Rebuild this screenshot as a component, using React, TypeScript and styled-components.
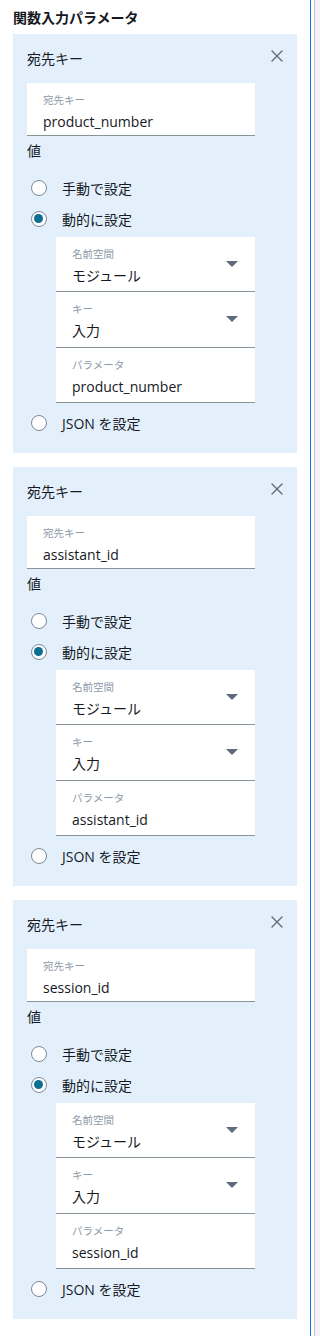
import React from 'react';
import styled, { createGlobalStyle } from 'styled-components';

const GlobalStyle = createGlobalStyle`
  body {
    margin: 0;
    background: #ffffff;
    color: #16191f;
    font-family: "Open Sans", "Noto Sans CJK JP", sans-serif;
  }
`;

type Param = {
  destKey: string;
  mode: 'manual' | 'dynamic' | 'json';
  namespace: string;
  key: string;
  parameter: string;
};

const params: Param[] = [
  { destKey: 'product_number', mode: 'dynamic', namespace: 'モジュール', key: '入力', parameter: 'product_number' },
  { destKey: 'assistant_id', mode: 'dynamic', namespace: 'モジュール', key: '入力', parameter: 'assistant_id' },
  { destKey: 'session_id', mode: 'dynamic', namespace: 'モジュール', key: '入力', parameter: 'session_id' },
];

const CloseIcon = () => (
  <svg width="12" height="12" viewBox="0 0 12 12">
    <path d="M1 1 L11 11 M11 1 L1 11" stroke="#5f6b7a" strokeWidth="1.4" strokeLinecap="round" fill="none" />
  </svg>
);

const Caret = () => (
  <svg width="12" height="6" viewBox="0 0 12 6">
    <path d="M0 0 H12 L6 6 Z" fill="#5f6b7a" />
  </svg>
);

const ParamCard: React.FC<{ param: Param }> = ({ param }) => {
  return (
    <StyledCard>
      <StyledHeader>
        <StyledHeaderTitle>宛先キー</StyledHeaderTitle>
        <StyledClose type="button" aria-label="削除">
          <CloseIcon />
        </StyledClose>
      </StyledHeader>

      <StyledField width={228} height={53}>
        <StyledFieldBody>
          <StyledFieldLabel>宛先キー</StyledFieldLabel>
          <StyledFieldValue>{param.destKey}</StyledFieldValue>
        </StyledFieldBody>
      </StyledField>

      <StyledSectionLabel>値</StyledSectionLabel>

      <StyledRadioGroup>
        <StyledRadioRow>
          <StyledRadio checked={param.mode === 'manual'} />
          <span>手動で設定</span>
        </StyledRadioRow>
        <StyledRadioRow>
          <StyledRadio checked={param.mode === 'dynamic'} />
          <span>動的に設定</span>
        </StyledRadioRow>

        <StyledNested>
          <StyledField width={199} height={55}>
            <StyledFieldBody>
              <StyledFieldLabel>名前空間</StyledFieldLabel>
              <StyledFieldValue>{param.namespace}</StyledFieldValue>
            </StyledFieldBody>
            <StyledCaretWrap>
              <Caret />
            </StyledCaretWrap>
          </StyledField>
          <StyledField width={199} height={56}>
            <StyledFieldBody>
              <StyledFieldLabel>キー</StyledFieldLabel>
              <StyledFieldValue>{param.key}</StyledFieldValue>
            </StyledFieldBody>
            <StyledCaretWrap>
              <Caret />
            </StyledCaretWrap>
          </StyledField>
          <StyledField width={199} height={55}>
            <StyledFieldBody>
              <StyledFieldLabel>パラメータ</StyledFieldLabel>
              <StyledFieldValue>{param.parameter}</StyledFieldValue>
            </StyledFieldBody>
          </StyledField>
        </StyledNested>

        <StyledRadioRow>
          <StyledRadio checked={param.mode === 'json'} />
          <span>JSON を設定</span>
        </StyledRadioRow>
      </StyledRadioGroup>
    </StyledCard>
  );
};

const App: React.FC = () => {
  return (
    <>
      <GlobalStyle />
      <StyledPage>
        <StyledMain>
          <StyledTitle>関数入力パラメータ</StyledTitle>
          <StyledCardList>
            {params.map((param, index) => (
              <ParamCard key={index} param={param} />
            ))}
          </StyledCardList>
        </StyledMain>
        <StyledGutter />
        <StyledRail />
      </StyledPage>
    </>
  );
};

export default App;

const StyledPage = styled.div`
  display: flex;
  min-height: 1336px;
`;

const StyledMain = styled.div`
  box-sizing: border-box;
  width: 311px;
  padding: 8px 0 0 13px;
  border-right: 1px solid #0972d3;
`;

const StyledGutter = styled.div`
  width: 3px;
  background: #ffffff;
`;

const StyledRail = styled.div`
  flex: 1;
  border-left: 1px solid #c6c6cd;
  background: #f4f4f6;
`;

const StyledTitle = styled.div`
  font-size: 14px;
  font-weight: 700;
  line-height: 20px;
  margin-bottom: 6px;
`;

const StyledCardList = styled.div`
  display: flex;
  flex-direction: column;
  gap: 14px;
  width: 284px;
`;

const StyledCard = styled.div`
  background: #e3f0fc;
  padding: 14px 14px 15px;
`;

const StyledHeader = styled.div`
  display: flex;
  justify-content: space-between;
  align-items: flex-start;
  height: 22px;
  margin-bottom: 13px;
`;

const StyledHeaderTitle = styled.div`
  font-size: 14px;
  line-height: 22px;
`;

const StyledClose = styled.button`
  display: flex;
  margin-top: 2px;
  padding: 0;
  border: none;
  background: transparent;
  cursor: pointer;
`;

const StyledField = styled.div<{ width: number; height: number }>`
  box-sizing: border-box;
  display: flex;
  width: ${(p) => p.width}px;
  height: ${(p) => p.height}px;
  padding: 10px 17px 0 16px;
  background: #ffffff;
  border-bottom: 1px solid #879596;
`;

const StyledFieldBody = styled.div`
  flex: 1;
`;

const StyledFieldLabel = styled.div`
  font-size: 10.5px;
  line-height: 14px;
  color: #8d99a8;
  margin-bottom: 5px;
`;

const StyledFieldValue = styled.div`
  font-size: 14px;
  line-height: 20px;
`;

const StyledCaretWrap = styled.div`
  display: flex;
  padding-top: 14px;
`;

const StyledSectionLabel = styled.div`
  font-size: 14px;
  line-height: 20px;
  margin-top: 5px;
`;

const StyledRadioGroup = styled.div`
  margin-top: 11px;
`;

const StyledRadioRow = styled.div`
  display: flex;
  align-items: center;
  gap: 15px;
  height: 31px;
  padding-left: 4px;
  font-size: 14px;
`;

const StyledRadio = styled.span<{ checked: boolean }>`
  position: relative;
  box-sizing: border-box;
  width: 16px;
  height: 16px;
  border-radius: 50%;
  border: 1.5px solid #7d8998;
  background: #ffffff;

  &::after {
    content: '';
    display: ${(p) => (p.checked ? 'block' : 'none')};
    position: absolute;
    top: 2px;
    left: 2px;
    width: 9px;
    height: 9px;
    border-radius: 50%;
    background: #0b6f94;
  }
`;

const StyledNested = styled.div`
  margin: 3px 0 4px 29px;
`;
